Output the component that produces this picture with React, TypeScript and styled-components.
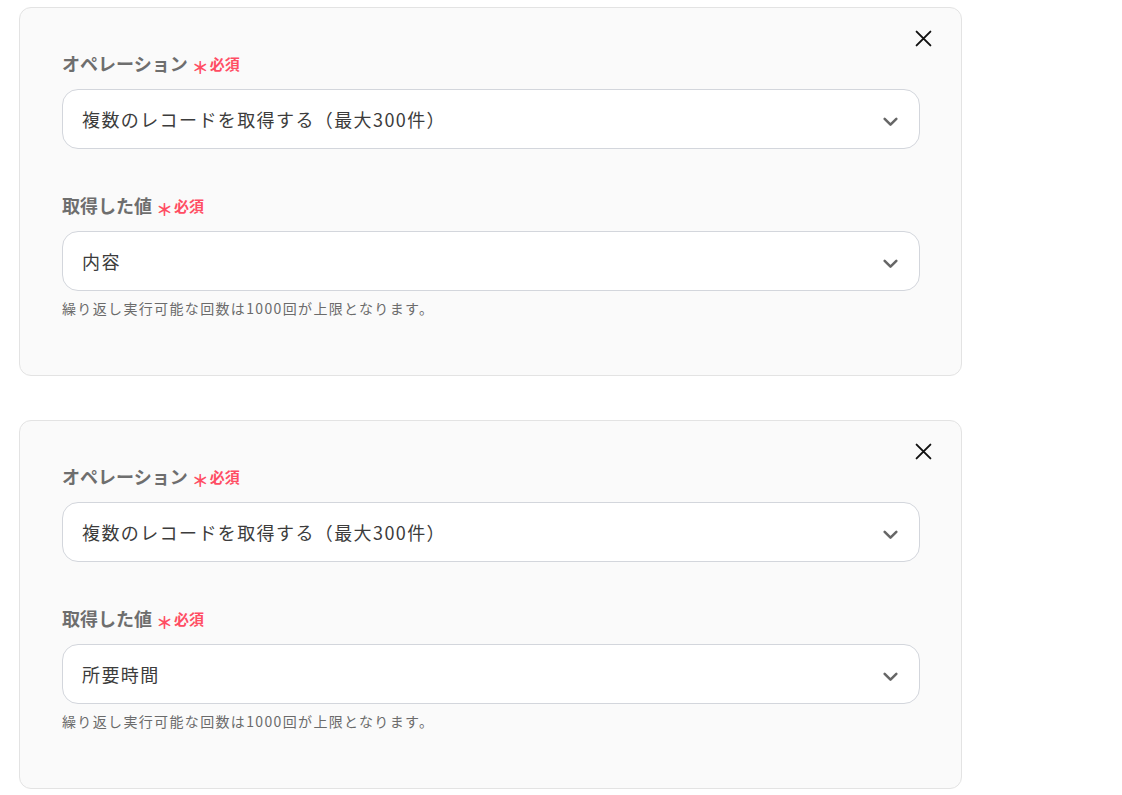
import React from 'react';
import styled, { createGlobalStyle } from 'styled-components';

const GlobalStyle = createGlobalStyle`
  body {
    margin: 0;
    background: #ffffff;
    font-family: "Noto Sans CJK JP", "Noto Sans", sans-serif;
  }
`;

const Page = styled.div`
  display: flex;
  flex-direction: column;
  gap: 44px;
  padding: 7px 0 0 19px;
  width: 943px;
`;

const Card = styled.div`
  position: relative;
  background: #fafafa;
  border: 1px solid #e3e3e3;
  border-radius: 12px;
  padding: 43px 41px 57px 42px;
`;

const CloseButton = styled.button`
  position: absolute;
  top: 21px;
  right: 29px;
  width: 18px;
  height: 18px;
  padding: 0;
  border: none;
  background: none;
  cursor: pointer;
  display: flex;
  align-items: center;
  justify-content: center;
`;

const Field = styled.div<{ $gapTop?: boolean }>`
  margin-top: ${(p) => (p.$gapTop ? '44px' : '0')};
`;

const Label = styled.div`
  display: flex;
  align-items: center;
  height: 24px;
  margin-bottom: 14px;
  font-size: 18px;
  font-weight: 700;
  color: #6e6e6e;
`;

const Required = styled.span`
  display: inline-flex;
  align-items: center;
  margin-left: 4px;
  font-size: 15px;
  font-weight: 700;
  color: #ff4d63;
`;

const Asterisk = styled.span`
  font-size: 17px;
  font-weight: 700;
  line-height: 1;
  margin-right: 1px;
  transform: translateY(3px);
`;

const Select = styled.div`
  display: flex;
  align-items: center;
  justify-content: space-between;
  height: 58px;
  background: #ffffff;
  border: 1px solid #d3d6dc;
  border-radius: 16px;
  padding: 0 20px 0 19px;
  font-size: 18px;
  letter-spacing: 1.4px;
  color: #3c3c3c;
`;

const Help = styled.div`
  margin-top: 7px;
  font-size: 14px;
  line-height: 20px;
  letter-spacing: 1.35px;
  color: #6b6b6b;
`;

const ChevronBox = styled.span`
  display: flex;
  margin-top: 4px;
`;

const Chevron = () => (
  <ChevronBox>
    <svg width="17" height="17" viewBox="0 0 16 16" fill="none">
      <path d="M2.5 5.5 L8 11 L13.5 5.5" stroke="#666" strokeWidth="2.4" strokeLinecap="round" strokeLinejoin="round" />
    </svg>
  </ChevronBox>
);

const XIcon = () => (
  <svg width="17" height="17" viewBox="0 0 16 16" fill="none">
    <path d="M1.5 1.5 L14.5 14.5 M14.5 1.5 L1.5 14.5" stroke="#111" strokeWidth="1.8" strokeLinecap="round" />
  </svg>
);

const RequiredMark = () => (
  <Required>
    <Asterisk>＊</Asterisk>必須
  </Required>
);

const LoopCard = ({ value }: { value: string }) => (
  <Card>
    <CloseButton aria-label="close">
      <XIcon />
    </CloseButton>
    <Field>
      <Label>
        オペレーション
        <RequiredMark />
      </Label>
      <Select>
        複数のレコードを取得する（最大300件）
        <Chevron />
      </Select>
    </Field>
    <Field $gapTop>
      <Label>
        取得した値
        <RequiredMark />
      </Label>
      <Select>
        {value}
        <Chevron />
      </Select>
      <Help>繰り返し実行可能な回数は1000回が上限となります。</Help>
    </Field>
  </Card>
);

export default function App() {
  return (
    <>
      <GlobalStyle />
      <Page>
        <LoopCard value="内容" />
        <LoopCard value="所要時間" />
      </Page>
    </>
  );
}
